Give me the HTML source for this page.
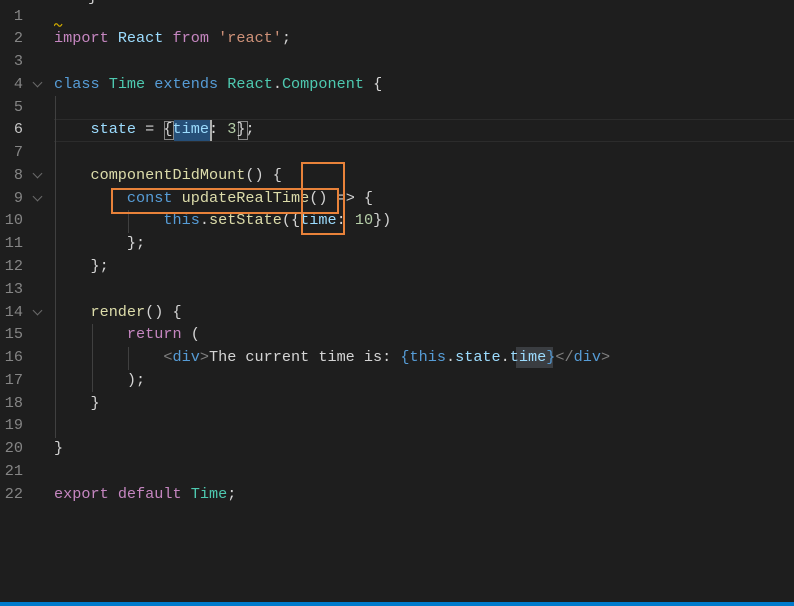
<!DOCTYPE html>
<html><head><meta charset="utf-8"><style>
html,body{margin:0;padding:0;background:#1e1e1e;width:794px;height:606px;overflow:hidden;position:relative}
.ln{position:absolute;left:0;width:23px;text-align:right;color:#858585;font:15.2px/22.76px "Liberation Mono",monospace}
.c{position:absolute;left:54px;white-space:pre;color:#d4d4d4;font:15.2px/22.76px "Liberation Mono",monospace}
.k{color:#c586c0}.b{color:#569cd6}.t{color:#4ec9b0}.v{color:#9cdcfe}.f{color:#dcdcaa}.s{color:#ce9178}.n{color:#b5cea8}.g{color:#808080}
.guide{position:absolute;width:1px;background:#404040}
.ch{position:absolute;left:34px;width:6px;height:6px;border-right:1px solid #6a6a6a;border-bottom:1px solid #6a6a6a;transform:rotate(45deg)}
.box{position:absolute;border:2px solid #e8823a;box-sizing:border-box}
</style></head><body>
<div style="position:absolute;left:54px;right:0;top:119px;height:23px;border-top:1px solid #2c2c2c;border-bottom:1px solid #2c2c2c;box-sizing:border-box"></div>
<div style="position:absolute;left:174px;top:120px;width:37px;height:21px;background:#264f78"></div>
<div style="position:absolute;left:210px;top:120px;width:2px;height:21px;background:#aeafad"></div>
<div style="position:absolute;left:164px;top:121px;width:10px;height:19px;border:1px solid #888;box-sizing:border-box"></div>
<div style="position:absolute;left:238px;top:121px;width:10px;height:19px;border:1px solid #888;box-sizing:border-box"></div>
<div style="position:absolute;left:516px;top:347px;width:37px;height:21px;background:#3a3d41"></div>
<div class="guide" style="left:55px;top:96px;height:342px"></div>
<div class="guide" style="left:92px;top:324px;height:68px"></div>
<div class="guide" style="left:128px;top:210px;height:23px"></div>
<div class="guide" style="left:128px;top:347px;height:23px"></div>
<div class="ch" style="top:79px"></div>
<div class="ch" style="top:170px"></div>
<div class="ch" style="top:193px"></div>
<div class="ch" style="top:307px"></div>
<div style="position:absolute;left:88px;top:-14px;color:#d4d4d4;font:15.2px/22.76px 'Liberation Mono',monospace">}</div>
<div class="ln" style="top:4.6px">1</div>
<div class="ln" style="top:27.4px">2</div><div class="c" style="top:27.4px"><span class="k">import</span> <span class="v">React</span> <span class="k">from</span> <span class="s">'react'</span>;</div>
<svg style="position:absolute;left:54px;top:22px" width="10" height="6"><path d="M0 4 Q2 0 4 3 Q6 6 8 2" stroke="#cca700" fill="none" stroke-width="1.2"/></svg>
<div class="ln" style="top:50.1px">3</div>
<div class="ln" style="top:72.9px">4</div><div class="c" style="top:72.9px"><span class="b">class</span> <span class="t">Time</span> <span class="b">extends</span> <span class="t">React</span>.<span class="t">Component</span> {</div>
<div class="ln" style="top:95.6px">5</div>
<div class="ln" style="top:118.4px;color:#c6c6c6">6</div><div class="c" style="top:118.4px">    <span class="v">state</span> = {<span class="v">time</span>: <span class="n">3</span>};</div>
<div class="ln" style="top:141.2px">7</div>
<div class="ln" style="top:163.9px">8</div><div class="c" style="top:163.9px">    <span class="f">componentDidMount</span>() {</div>
<div class="ln" style="top:186.7px">9</div><div class="c" style="top:186.7px">        <span class="b">const</span> <span class="f">updateRealTime</span>() =&gt; {</div>
<div class="ln" style="top:209.4px">10</div><div class="c" style="top:209.4px">            <span class="b">this</span>.<span class="f">setState</span>({<span class="v">time</span>: <span class="n">10</span>})</div>
<div class="ln" style="top:232.2px">11</div><div class="c" style="top:232.2px">        };</div>
<div class="ln" style="top:255px">12</div><div class="c" style="top:255px">    };</div>
<div class="ln" style="top:277.7px">13</div>
<div class="ln" style="top:300.5px">14</div><div class="c" style="top:300.5px">    <span class="f">render</span>() {</div>
<div class="ln" style="top:323.2px">15</div><div class="c" style="top:323.2px">        <span class="k">return</span> (</div>
<div class="ln" style="top:346px">16</div><div class="c" style="top:346px">            <span class="g">&lt;</span><span class="b">div</span><span class="g">&gt;</span>The current time is: <span class="b">{</span><span class="b">this</span>.<span class="v">state</span>.<span class="v">time</span><span class="b">}</span><span class="g">&lt;/</span><span class="b">div</span><span class="g">&gt;</span></div>
<div class="ln" style="top:368.8px">17</div><div class="c" style="top:368.8px">        );</div>
<div class="ln" style="top:391.5px">18</div><div class="c" style="top:391.5px">    }</div>
<div class="ln" style="top:414.3px">19</div>
<div class="ln" style="top:437px">20</div><div class="c" style="top:437px">}</div>
<div class="ln" style="top:459.8px">21</div>
<div class="ln" style="top:482.6px">22</div><div class="c" style="top:482.6px"><span class="k">export</span> <span class="k">default</span> <span class="t">Time</span>;</div>
<div class="box" style="left:111px;top:188px;width:228px;height:26px"></div>
<div class="box" style="left:301px;top:162px;width:44px;height:73px"></div>
<div style="position:absolute;left:0;top:602px;width:794px;height:4px;background:#007acc"></div>
</body></html>
